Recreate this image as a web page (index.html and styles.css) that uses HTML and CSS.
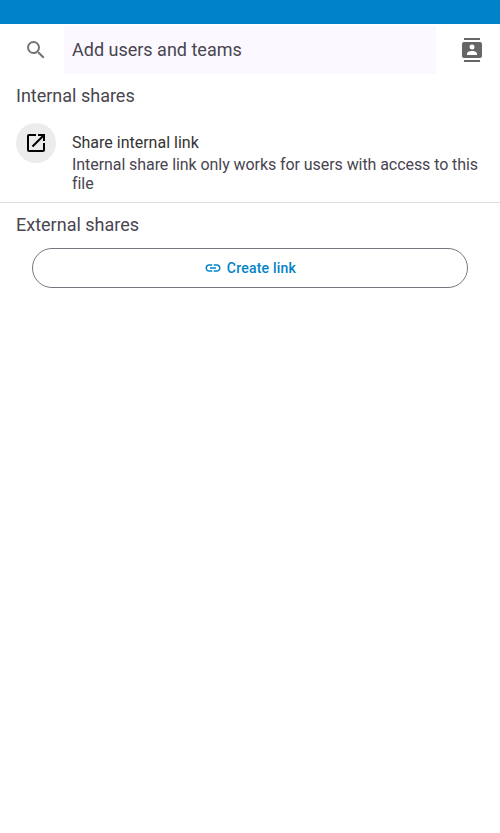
FILE: index.html
```html
<!DOCTYPE html>
<html lang="en">
<head>
<meta charset="utf-8">
<title>Sharing</title>
<link rel="stylesheet" href="styles.css">
</head>
<body>
<div class="status-bar"></div>
<div class="search">
  <svg class="search-icon" viewBox="0 0 24 24"><path d="M15.5 14h-.79l-.28-.27A6.471 6.471 0 0 0 16 9.5 6.5 6.5 0 1 0 9.5 16c1.61 0 3.09-.59 4.23-1.57l.27.28v.79l5 4.99L20.49 19l-4.99-5zm-6 0C7.01 14 5 11.99 5 9.5S7.01 5 9.5 5 14 7.01 14 9.5 11.99 14 9.5 14z"/></svg>
  <div class="search-field">Add users and teams</div>
  <svg class="contacts-icon" viewBox="0 0 24 24"><path d="M20 0H4v2h16V0zM4 24h16v-2H4v2zM20 4H4c-1.1 0-2 .9-2 2v12c0 1.1.9 2 2 2h16c1.1 0 2-.9 2-2V6c0-1.1-.9-2-2-2zm-8 2.500a2.500 2.500 0 1 1 0 5 2.500 2.500 0 0 1 0-5zM17 17H7v-1.500c0-1.670 3.330-2.500 5-2.500s5 .830 5 2.500V17z"/></svg>
</div>
<h2 class="heading">Internal shares</h2>
<div class="share-row">
  <span class="avatar"><svg viewBox="0 0 24 24"><path d="M19 19H5V5h7V3H5a2 2 0 0 0-2 2v14a2 2 0 0 0 2 2h14c1.1 0 2-.9 2-2v-7h-2v7zM14 3v2h3.590l-9.830 9.830 1.410 1.410L19 6.410V10h2V3h-7z"/></svg></span>
  <div class="share-text">
    <div class="share-title">Share internal link</div>
    <div class="share-desc">Internal share link only works for users with access to this file</div>
  </div>
</div>
<h2 class="heading external">External shares</h2>
<button class="create"><svg viewBox="0 0 24 24"><path d="M3.900 12c0-1.710 1.390-3.100 3.100-3.100h4V7H7c-2.760 0-5 2.240-5 5s2.240 5 5 5h4v-1.900H7c-1.710 0-3.100-1.390-3.100-3.100zM8 13h8v-2H8v2zm9-6h-4v1.900h4c1.710 0 3.100 1.390 3.100 3.100s-1.390 3.100-3.100 3.100h-4V17h4c2.760 0 5-2.240 5-5s-2.240-5-5-5z"/></svg><span>Create link</span></button>
</body>
</html>
```
FILE: styles.css
```css
* { box-sizing: border-box; }
body {
  margin: 0;
  background: #fff;
  color: #49454f;
  font-family: Roboto, sans-serif;
}
svg { display: block; flex: none; }
.status-bar { height: 24px; background: #0082c9; }
.search { display: flex; align-items: center; height: 52px; }
.search-icon { width: 24px; height: 24px; margin: 0 16px 0 24px; fill: #757575; }
.search-field {
  width: 372px;
  height: 48px;
  padding-left: 8px;
  background: #fbf8ff;
  font-size: 18px;
  line-height: 48px;
}
.contacts-icon { width: 24px; height: 24px; margin-left: 24px; fill: #666; }
.heading { margin: 0; padding: 8px 16px; font-size: 18px; font-weight: 400; line-height: 24px; }
.share-row {
  display: flex;
  align-items: flex-start;
  height: 87px;
  padding: 7px 16px 0;
  border-bottom: 1px solid #dedede;
}
.avatar {
  display: flex;
  align-items: center;
  justify-content: center;
  flex: none;
  width: 40px;
  height: 40px;
  margin-right: 16px;
  border-radius: 50%;
  background: #ececec;
}
.avatar svg { width: 24px; height: 24px; }
.share-text { font-size: 16px; line-height: 19px; padding-top: 10px; }
.share-title { margin-bottom: 3px; color: #333; }
.share-desc { letter-spacing: -0.07px; }
.external { padding-top: 10px; }
.create {
  display: flex;
  align-items: center;
  justify-content: center;
  gap: 5px;
  width: 436px;
  height: 40px;
  margin: 3px 32px;
  border: 1px solid #79747e;
  border-radius: 20px;
  background: #fff;
  color: #0082c9;
  font: 500 14px Roboto, sans-serif;
  letter-spacing: 0.22px;
}
.create svg { width: 18px; height: 18px; fill: #0082c9; }
```
